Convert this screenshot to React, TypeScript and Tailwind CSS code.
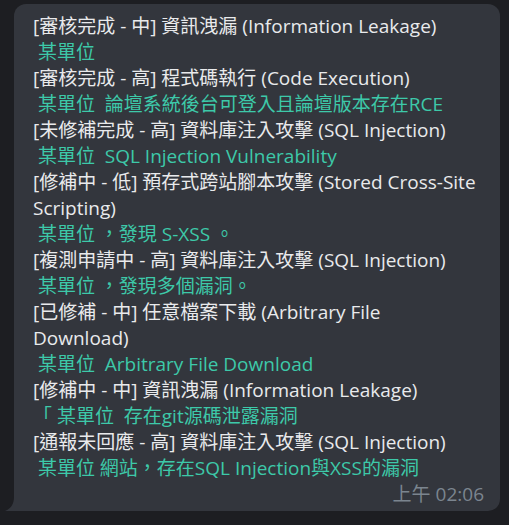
import React from 'react';

type Item = { head: string; body: string };

const items: Item[] = [
  { head: '[審核完成 - 中] 資訊洩漏 (Information Leakage)', body: ' 某單位' },
  { head: '[審核完成 - 高] 程式碼執行 (Code Execution)', body: ' 某單位  論壇系統後台可登入且論壇版本存在RCE' },
  { head: '[未修補完成 - 高] 資料庫注入攻擊 (SQL Injection)', body: ' 某單位  SQL Injection Vulnerability' },
  { head: '[修補中 - 低] 預存式跨站腳本攻擊 (Stored Cross-Site Scripting)', body: ' 某單位 ，發現 S-XSS 。' },
  { head: '[複測申請中 - 高] 資料庫注入攻擊 (SQL Injection)', body: ' 某單位 ，發現多個漏洞。' },
  { head: '[已修補 - 中] 任意檔案下載 (Arbitrary File Download)', body: ' 某單位  Arbitrary File Download' },
  { head: '[修補中 - 中] 資訊洩漏 (Information Leakage)', body: '「 某單位  存在git源碼泄露漏洞' },
  { head: '[通報未回應 - 高] 資料庫注入攻擊 (SQL Injection)', body: ' 某單位 網站，存在SQL Injection與XSS的漏洞' },
];

export default function App() {
  return (
    <div
      className="w-[509px] h-[525px] bg-[#1d1e22] pt-[4px] pl-[14px]"
      style={{ fontFamily: '"Open Sans", "Noto Sans CJK TC", sans-serif' }}
    >
      <div className="relative w-[486px] bg-[#33363d] rounded-[12px] rounded-bl-none pl-[19px] pr-[14px] pt-[9px] pb-[5px]">
        <div className="w-[445px] text-[19px] leading-[26px] whitespace-pre-wrap">
          {items.map((it, i) => (
            <div key={i}>
              <div className="text-[#e9eaec]">{it.head}</div>
              <div className="text-[#3dc9a9]">{it.body}</div>
            </div>
          ))}
        </div>
        <div className="flex justify-end pr-[2px] mt-[1px] text-[19px] leading-[24px] text-[#7b858f]">
          上午 02:06
        </div>
        <svg
          className="absolute left-[-9px] bottom-0"
          width="9"
          height="14"
          viewBox="0 0 9 14"
        >
          <path d="M9 0 V14 H0 C5 12 9 8 9 0 Z" fill="#33363d" />
        </svg>
      </div>
    </div>
  );
}
